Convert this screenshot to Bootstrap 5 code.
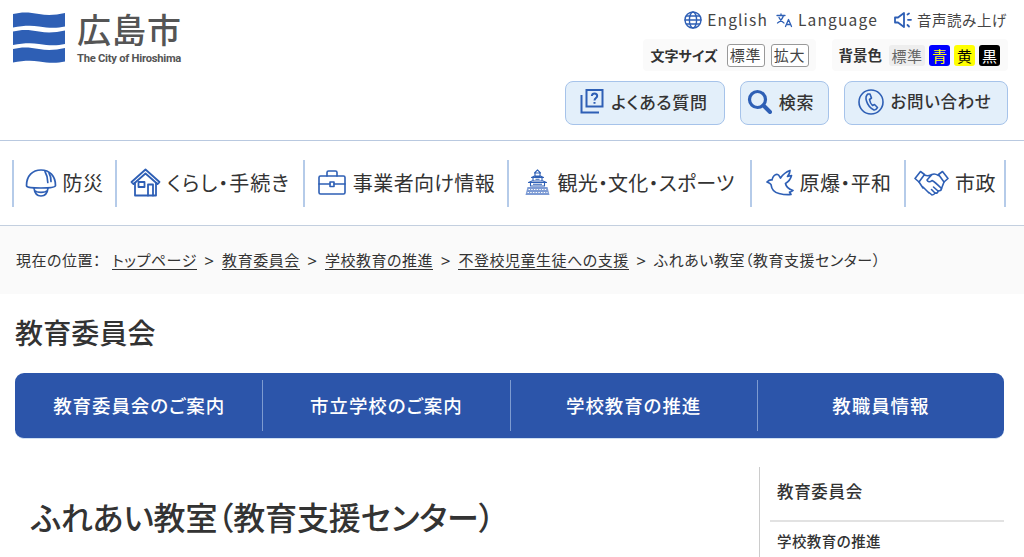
<!DOCTYPE html>
<html lang="ja">
<head>
<meta charset="utf-8">
<title>ふれあい教室（教育支援センター）</title>
<link href="https://cdn.jsdelivr.net/npm/bootstrap@5.3.0/dist/css/bootstrap.min.css" rel="stylesheet">
<style>
html,body{height:557px;overflow:hidden}
body{font-family:"Noto Sans CJK JP","Noto Sans",sans-serif;color:#333;background:#fff;font-feature-settings:"palt"}
a{color:inherit;text-decoration:none}
svg{display:block;flex:none}
.ic{fill:none;stroke:#2e5fb5;stroke-width:1.7;stroke-linecap:round;stroke-linejoin:round}
.site-head{height:141px;border-bottom:1px solid #b9c9e0;padding:12px 16px 0 13px}
.logo-txt{margin-left:12px;color:#555}
.logo-jp{font-size:34px;line-height:34px;letter-spacing:.03em;font-weight:500}
.logo-en{font-family:"Roboto",sans-serif;font-size:11.200px;font-weight:700;line-height:12px;margin-top:7px;letter-spacing:-.25px;white-space:nowrap}
.util-row{height:24px;font-size:14.500px;letter-spacing:.04em;color:#444;margin-top:-4px;margin-right:1px}
.util-row a{display:flex;align-items:center;gap:5px}
.lat-txt{font-size:15.500px;letter-spacing:.075em}
.tool-row{margin-top:7px;height:32px;gap:16px}
.tool-grp{background:#fafafa;border-radius:4px;height:32px;font-size:14px;padding:0 7px;gap:6px}
.tool-lbl{font-weight:700;margin-right:3px;white-space:nowrap}
.size-btn{border:1px solid #999;border-radius:3px;background:#fff;line-height:20px;width:38px;text-align:center;height:23px;color:#444;font-size:15px;letter-spacing:.05em}
.bg-chip{border-radius:3px;line-height:21px;width:21px;text-align:center;height:21px;font-size:15px}
.chip-std{background:#eee;color:#666;width:36px;letter-spacing:.04em}
.chip-blue{background:#00f;color:#ff0}
.chip-yellow{background:#ff0;color:#000}
.chip-black{background:#000;color:#fff}
.tool-grp2{gap:4px;padding-right:8px;font-size:14.500px}
.head-btns{margin-top:10px;gap:15px}
.head-btn{height:44px;background:#e3effa;border:1px solid #a6c3ea;border-radius:8px;font-size:17px;font-weight:500;letter-spacing:.04em;gap:7px;color:#333;padding-bottom:3px}
.hb1{width:160px;padding-right:2px}.hb2{width:89px;padding-right:8px}.hb3{width:164px;padding-right:3px;font-size:16.500px}
.g-nav{height:85px;border-bottom:1px solid #c3cfdf;padding:19px 17px 0 12px}
.g-item{height:47px;border-left:2px solid #b5cbe9;gap:6px;font-size:20px;letter-spacing:.02em;color:#333;justify-content:center;white-space:nowrap;padding-bottom:2px}
.g-item:last-child{border-right:2px solid #b5cbe9}
.w1{width:103px;padding-right:1px}.w2{width:188px;letter-spacing:.05em}.w3{width:204px;gap:7px;padding-left:1px}.w4{width:243px;letter-spacing:.01em}.w5{width:154px;padding-left:1px}.w6{width:102px}
.crumbs{height:68px;background:#fafafa;padding:0 16px;font-size:15px;letter-spacing:.035em;color:#333;white-space:nowrap}
.crumbs a{border-bottom:1px solid #333;line-height:19px;display:inline-block}
.crumbs .sep{margin:0 7.500px;font-size:17px;line-height:19px;font-family:"Noto Sans",sans-serif}
.crumb-lbl{margin-right:11px}
.sec-title{font-size:28px;font-weight:500;line-height:40px;margin:18px 0 0 15px;letter-spacing:.005em;color:#333}
.blue-bar{height:66px;margin:21px 20px 0 15px;background:#2c55aa;border-radius:9px;border-bottom:1px solid #cfe0f3;padding:7px 0 7px 1px}
.blue-item{flex:1 1 0;color:#fff;font-size:18.500px;font-weight:500;letter-spacing:.05em;border-left:1px solid #7e9bd0}
.blue-item:first-child{border-left:0}
.main-row{margin-top:28px}
.page-h{font-size:32px;font-weight:500;line-height:46px;padding:26px 0 0 31px;width:759px;letter-spacing:-.004em;color:#333;white-space:nowrap}
.side{border-left:1px solid #ccc;width:245px;padding-left:10px;height:90px}
.side-h{height:55px;font-size:16.500px;font-weight:500;line-height:49px;padding-left:7px;border-bottom:2px solid #e2e2e2;letter-spacing:.04em}
.side-it{font-size:14.500px;font-weight:500;padding:9px 0 0 7px;letter-spacing:.03em;line-height:20px}
</style>
</head>
<body>
<header class="site-head d-flex justify-content-between">
  <a href="#" class="d-flex align-items-start">
    <svg width="52" height="52" viewBox="0 0 52 52" fill="#2e5fb5">
      <path d="M0 2C9-.5 17 .2 26 2S43 3 52 1V14.500C43 16.500 35 15.800 26 14.500S9 14 0 15.500Z"/>
      <path d="M0 19.500C9 17 17 17.700 26 19.500S43 20.500 52 18.500V32C43 34 35 33.300 26 32S9 31.500 0 33Z"/>
      <path d="M0 37C9 34.500 17 35.200 26 37S43 38 52 36V49.500C43 51.500 35 50.800 26 49.500S9 49 0 50.500Z"/>
    </svg>
    <div class="logo-txt">
      <div class="logo-jp">広島市</div>
      <div class="logo-en">The City of Hiroshima</div>
    </div>
  </a>
  <div class="d-flex flex-column align-items-end">
    <div class="util-row d-flex align-items-center">
      <a href="#">
        <svg width="18" height="18" viewBox="0 0 18 18" class="ic" style="stroke-width:1.4"><circle cx="9" cy="9" r="8"/><ellipse cx="9" cy="9" rx="3.600" ry="8"/><path d="M1 9H17M2.200 5H15.800M2.200 13H15.800"/></svg><span class="lat-txt">English</span></a>
      <a href="#" class="ms-2">
        <svg width="17" height="15" viewBox="0 0 17 15" class="ic" style="stroke-width:1.300"><path d="M1 2.500H9M5 1V2.500M7.500 2.500C6.500 6 4 8.500 1.500 10M3 4.500C4 7 5.500 8.500 8 10"/><path d="M9.500 13.500L12.500 6.500L15.500 13.500M10.500 11.500H14.500"/></svg><span class="lat-txt">Language</span></a>
      <a href="#" class="ms-3">
        <svg width="18" height="18" viewBox="0 0 18 18" class="ic" style="stroke-width:1.800"><path d="M1 6.500H4L10 2V16L4 11.500H1Z"/><path d="M13.500 3.500L15 2.500M14 8.800H17M13.500 14L15 15.500" /></svg>音声読み上げ</a>
    </div>
    <div class="tool-row d-flex align-items-center">
      <div class="tool-grp d-flex align-items-center">
        <span class="tool-lbl">文字サイズ</span>
        <a href="#" class="size-btn">標準</a>
        <a href="#" class="size-btn">拡大</a>
      </div>
      <div class="tool-grp tool-grp2 d-flex align-items-center">
        <span class="tool-lbl">背景色</span>
        <a href="#" class="bg-chip chip-std">標準</a>
        <a href="#" class="bg-chip chip-blue">青</a>
        <a href="#" class="bg-chip chip-yellow">黄</a>
        <a href="#" class="bg-chip chip-black">黒</a>
      </div>
    </div>
    <div class="head-btns d-flex">
      <a href="#" class="head-btn hb1 d-flex align-items-center justify-content-center">
        <svg width="24" height="25" viewBox="0 0 24 25" class="ic" style="stroke-width:2;stroke-linecap:butt;stroke-linejoin:miter"><rect x="6.500" y="1" width="16" height="16.500"/><path d="M1.500 6V23.500H19"/><path d="M11.800 7C12 5.200 13.200 4.500 14.500 4.500C16 4.500 17.200 5.500 17.200 7C17.200 9 14.500 9.200 14.500 11.500M14.500 13V14.800"/></svg>
        よくある質問</a>
      <a href="#" class="head-btn hb2 d-flex align-items-center justify-content-center">
        <svg width="25" height="25" viewBox="0 0 25 25" class="ic" style="stroke-width:3.200"><circle cx="10.500" cy="10.500" r="8"/><path d="M16.500 16.500L23 23" stroke-width="4"/></svg>
        検索</a>
      <a href="#" class="head-btn hb3 d-flex align-items-center justify-content-center">
        <svg width="26" height="26" viewBox="0 0 26 26" class="ic" style="stroke-width:1.600"><circle cx="13" cy="13" r="12"/><path d="M10 5C8 6.500 7.500 9 8.500 12C9.500 15.500 12 19 16 21C17.500 21.500 18.500 20 19.500 18.500L16.500 15.500L14.500 16.500C13 15 11.800 12.500 11.500 10.500L13.500 9L12 5Z"/></svg>
        お問い合わせ</a>
    </div>
  </div>
</header>

<nav class="g-nav d-flex">
  <a href="#" class="g-item w1 d-flex align-items-center">
    <svg width="32" height="30" viewBox="0 0 32 30" class="ic"><path d="M1.500 17.500C1.500 8 7.500 2 16 2S30.500 8 30.500 17.500C30.500 19 28 20 16 20S1.500 19 1.500 17.500Z"/><path d="M20 3.500C22 7 22.800 11 22.800 14.500M24 5C25.500 7.500 26 10.500 26 13.500"/><path d="M9 20C9.500 25 12 28 16 28S22.500 25 23 20M9.500 22.500C12 25 20 25 22.500 22.500"/></svg>
    防災</a>
  <a href="#" class="g-item w2 d-flex align-items-center">
    <svg width="31" height="29" viewBox="0 0 31 29" class="ic" style="stroke-width:1.800"><path d="M1.500 14L15.500 1.500L29.500 14L27.500 16L15.500 5.500L3.500 16Z"/><path d="M5 15V27.500H26V15"/><rect x="8.500" y="14" width="6" height="5"/><path d="M18 27.500V16.500H23V27.500"/></svg>
    くらし・手続き</a>
  <a href="#" class="g-item w3 d-flex align-items-center">
    <svg width="28" height="25" viewBox="0 0 28 25" class="ic" style="stroke-width:1.600"><rect x="1" y="6" width="26" height="18" rx="1.500"/><path d="M9 6V2.500C9 1.500 9.500 1 10.500 1H17.500C18.500 1 19 1.500 19 2.500V6M1 14H12M16 14H27"/><rect x="12" y="12" width="4" height="4.500"/></svg>
    事業者向け情報</a>
  <a href="#" class="g-item w4 d-flex align-items-center gap-2">
    <svg width="25" height="27" viewBox="0 0 25 27" class="ic" style="stroke-width:1.100;stroke-linecap:butt"><path d="M12.500 .8L9.500 4H15.500ZM10 4V7.500H15V4M6.500 8.500L9.500 7H15.500L18.500 8.500ZM8 8.500V12H17V8.500M10.500 10.200H14.500M3.500 13.500L7 12H18L21.500 13.500ZM5.500 13.500V17H19.500V13.500M8 15.200H17"/><path d="M2.500 18H22.500L24.500 26H.5Z" fill="#7d9bd4" stroke="none"/><path d="M3.500 20.500H21.500M2.500 23.500H22.500" stroke="#fff" stroke-width="1" stroke-dasharray="1.500 1.200"/></svg>
    観光・文化・スポーツ</a>
  <a href="#" class="g-item w5 d-flex align-items-center">
    <svg width="28" height="27" viewBox="0 0 28 27" class="ic" style="stroke-width:1.700"><path d="M1 13C3 11 4.500 10.500 6 11C6.500 7.500 9 5 11.500 5.500C13 5.800 13.500 7.500 14.500 9C16.500 6 20 3 24 1.500C24 4 23 5.500 21.500 7.500L25.500 6.500C24.500 10.500 22 13 19.500 14.500C20 17.500 22.500 20 27 21.500C26 22.500 25 23 23.500 23L25 25.500C21 26 17 25.500 13 24.500C8.500 23.500 5.500 20 5 15.500C4 14.500 2.500 13.800 1 13Z"/></svg>
    原爆・平和</a>
  <a href="#" class="g-item w6 d-flex align-items-center">
    <svg width="35" height="26" viewBox="0 0 35 26" class="ic" style="stroke-width:1.600"><path d="M1 8.500L6.500 1.500L10.500 4.500L5 12Z"/><path d="M34 8.500L28.500 1.500L24.500 4.500L30 12Z"/><path d="M10 5C13 6 15 6.500 18 4.500C20 3.500 22 4 24.500 5.500M18 4.500L13 10C13.500 12 16 12.500 18 10.500C21 12 25 16 27.500 18.500L30 12"/><path d="M5 12L9 18M9 17L12 20M12 20L15 23M15 22.500L18 25C20 25 20.500 24 21 23M21 23C23 23.500 24 22.500 24 21C26 21 27.500 20 27.500 18.500"/><path d="M19.500 17L24 21M17.500 19.500L21 23"/></svg>
    市政</a>
</nav>

<div class="crumbs d-flex align-items-center">
  <span class="crumb-lbl">現在の位置：</span>
  <a href="#">トップページ</a><span class="sep">&gt;</span>
  <a href="#">教育委員会</a><span class="sep">&gt;</span>
  <a href="#">学校教育の推進</a><span class="sep">&gt;</span>
  <a href="#">不登校児童生徒への支援</a><span class="sep">&gt;</span>
  <span>ふれあい教室（教育支援センター）</span>
</div>

<div class="sec-title">教育委員会</div>

<div class="blue-bar d-flex">
  <a href="#" class="blue-item d-flex align-items-center justify-content-center">教育委員会のご案内</a>
  <a href="#" class="blue-item d-flex align-items-center justify-content-center">市立学校のご案内</a>
  <a href="#" class="blue-item d-flex align-items-center justify-content-center">学校教育の推進</a>
  <a href="#" class="blue-item d-flex align-items-center justify-content-center">教職員情報</a>
</div>

<div class="main-row d-flex">
  <h1 class="page-h m-0">ふれあい教室（教育支援センター）</h1>
  <aside class="side">
    <div class="side-h">教育委員会</div>
    <div class="side-it">学校教育の推進</div>
  </aside>
</div>
</body>
</html>
